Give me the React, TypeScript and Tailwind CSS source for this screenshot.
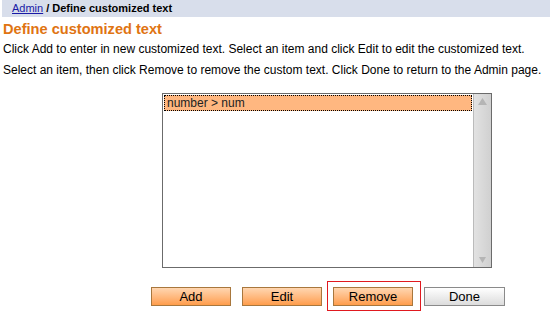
export default function App() {
  return (
    <div className="w-[550px] h-[311px] bg-white overflow-hidden relative" style={{ fontFamily: '"Liberation Sans", Arial, sans-serif' }}>
      <div className="ml-[2px] h-[17px] bg-[#d8deeb] flex items-center pl-[10px] text-[11px] font-bold text-black">
        <a className="underline text-[#1a1aa6] font-normal" href="#">Admin</a>
        <span className="ml-[3px]">/ Define customized text</span>
      </div>
      <div className="pl-[3px] pt-[3px] text-[14.6px] font-bold text-[#e07412] leading-[18px]">Define customized text</div>
      <div className="pl-[3px] text-[12px] text-black leading-[21px] mt-[1px]">
        <div>Click Add to enter in new customized text. Select an item and click Edit to edit the customized text.</div>
        <div>Select an item, then click Remove to remove the custom text. Click Done to return to the Admin page.</div>
      </div>
      <div className="ml-[162px] mt-[12px] w-[330px] h-[175px] border border-[#6b6b6b] flex">
        <div className="flex-1 p-[1px]">
          <div className="h-[16px] bg-[#ffb780] border border-dotted border-black text-[12px] leading-[14px] text-[#222] pl-[2px]">number &gt; num</div>
        </div>
        <div className="w-[18px] border-l border-[#bbb] bg-gradient-to-r from-[#e2e2e2] to-[#d0d0d0] flex flex-col justify-between items-center py-[4px]">
          <svg width="9" height="7" viewBox="0 0 9 7"><path d="M4.5 0L9 7H0z" fill="#b5b5b5" /></svg>
          <svg width="7" height="6" viewBox="0 0 7 6"><path d="M0 0h7L3.5 6z" fill="#b5b5b5" /></svg>
        </div>
      </div>
      <div className="flex mt-[19px] ml-[151px] gap-[11px] items-center text-[13px]">
        <button className="w-[80px] h-[19px] border border-[#a8773d] bg-gradient-to-b from-[#ffd6b0] to-[#ff9d4a] text-black leading-[17px]">Add</button>
        <button className="w-[80px] h-[19px] border border-[#a8773d] bg-gradient-to-b from-[#ffd6b0] to-[#ff9d4a] text-black leading-[17px]">Edit</button>
        <div className="relative">
          <div className="absolute left-[-6px] right-[-8px] top-[-6px] bottom-[-4px] border border-[#e0191f]" />
          <button className="w-[80px] h-[19px] border border-[#a8773d] bg-gradient-to-b from-[#ffd6b0] to-[#ff9d4a] text-black leading-[17px]">Remove</button>
        </div>
        <button className="w-[81px] h-[19px] border border-[#8a8a8a] bg-gradient-to-b from-white to-[#dcdcdc] text-black leading-[17px]">Done</button>
      </div>
    </div>
  );
}
